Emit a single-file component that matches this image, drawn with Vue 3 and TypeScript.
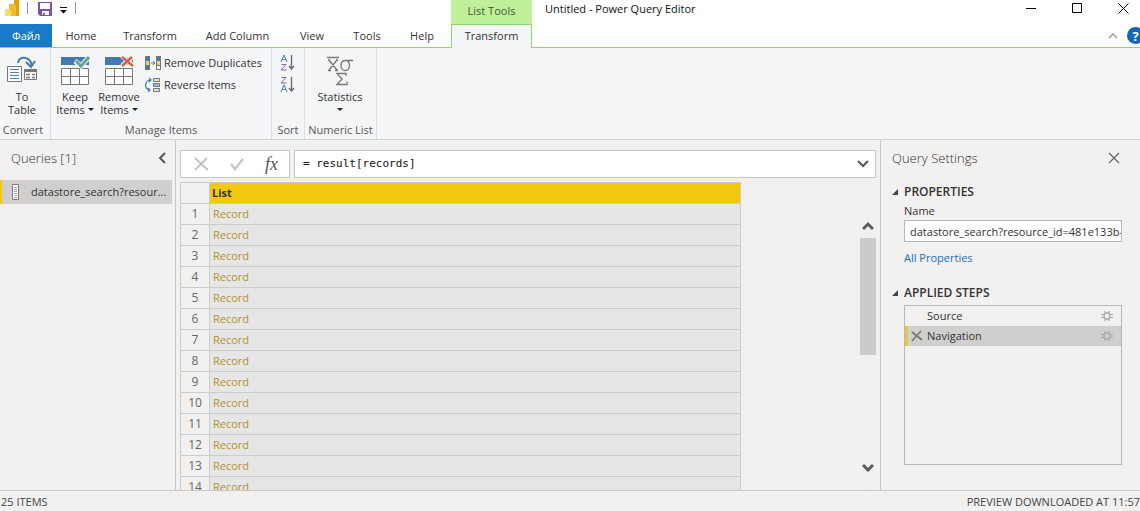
<script setup lang="ts">
import { ref } from 'vue'

const tabs: string[] = ['Home', 'Transform', 'Add Column', 'View', 'Tools', 'Help']
const rows: number[] = Array.from({ length: 14 }, (_, i) => i + 1)
const formula = ref('= result[records]')
const queryName = ref('datastore_search?resource_id=481e133b-')
const steps = ref<string[]>(['Source', 'Navigation'])
const selected = ref(1)
</script>

<template>
  <div class="app">
    <header class="header">
      <div class="quick">
        <svg class="logo" width="16" height="18" viewBox="0 0 16 18">
          <rect x="10" y="0" width="5" height="17" fill="#e0a112" />
          <path d="M5 5h5l2 2v10H5z" fill="#efbd2b" />
          <path d="M1 10h4l2 2v5H1z" fill="#f8dc6a" />
        </svg>
        <span class="bar"></span>
        <button class="plain save" aria-label="Save">
          <svg width="14" height="14" viewBox="0 0 14 14">
            <path d="M0 0h14v14H2l-2-2z" fill="#7f55a3" />
            <path d="M2 1h10v6H2zM4 9h7v4H4z" fill="#fff" />
            <path d="M5 11h2v2H5z" fill="#7f55a3" />
          </svg>
        </button>
        <button class="plain more" aria-label="Customize toolbar">
          <svg width="8" height="8" viewBox="0 0 8 8">
            <path d="M0 1h7v1H0zM0 4h7L3.500 7.500z" fill="#111" />
          </svg>
        </button>
        <span class="bar"></span>
      </div>
      <div class="context">List Tools</div>
      <div class="titlebar">
        <span class="title">Untitled - Power Query Editor</span>
        <div class="window">
          <button class="plain" aria-label="Minimize">
            <svg width="11" height="11" viewBox="0 0 11 11"><path d="M0 5.500h10" stroke="#000" /></svg>
          </button>
          <button class="plain" aria-label="Maximize">
            <svg width="11" height="11" viewBox="0 0 11 11"><path d="M.5 .5h9v9h-9z" fill="none" stroke="#000" /></svg>
          </button>
          <button class="plain" aria-label="Close">
            <svg width="11" height="11" viewBox="0 0 11 11"><path d="M.5 .5l10 10M10.500 .5l-10 10" stroke="#000" /></svg>
          </button>
        </div>
      </div>
      <nav class="tabs">
        <button class="tab file" lang="ru">Файл</button>
        <button v-for="tab in tabs" :key="tab" class="tab">{{ tab }}</button>
      </nav>
      <button class="tab current">Transform</button>
      <div class="help-area">
        <button class="plain" aria-label="Collapse ribbon">
          <svg width="10" height="6" viewBox="0 0 10 6"><path d="M1 5l4-4 4 4" fill="none" stroke="#999" stroke-width="1.300" /></svg>
        </button>
        <button class="plain help">?</button>
      </div>
    </header>

    <section class="ribbon">
      <div class="group convert">
        <div class="tools">
          <button class="plain big">
            <svg width="32" height="30" viewBox="0 0 32 30" fill="none">
              <path d="M12 7c0-7 12-8 14 3" stroke="#4279ad" stroke-width="2" />
              <path d="M20 6l5 5 4-6" stroke="#4279ad" stroke-width="2" />
              <path d="M1.500 10.500h14v15h-14z" fill="#fff" stroke="#777" />
              <path d="M4 13.500h9M4 16.500h9M4 19.500h9M4 22.500h9" stroke="#4d83b5" />
              <path d="M18.500 13.500h12v10h-12z" fill="#fff" stroke="#777" />
              <path d="M18 13h13v3H18z" fill="#777" />
              <path d="M20 18.500h4M26 18.500h3M20 21.500h4M26 21.500h3" stroke="#777" stroke-width="1.500" />
            </svg>
            <span>To</span><span>Table</span>
          </button>
        </div>
        <div class="caption">Convert</div>
      </div>
      <div class="group manage">
        <div class="tools">
          <button v-for="name in ['Keep', 'Remove']" :key="name" class="plain big">
            <svg width="30" height="30" viewBox="0 0 30 30" fill="none">
              <path d="M1 1h28v8H1z" fill="#4179b0" />
              <path d="M1.500 12.500h27v16h-27zM1 20.500h28M10.500 12v17M19.500 12v17" fill="#fff" stroke="#777" />
              <template v-if="name === 'Keep'">
                <path d="M15 5l6 5L30 0" stroke="#f4f5f7" stroke-width="5" />
                <path d="M16 5l5 5L29 1" stroke="#69a58d" stroke-width="3" />
              </template>
              <template v-else>
                <path d="M18 0l11 10M29 0L18 10" stroke="#f4f5f7" stroke-width="5" />
                <path d="M18 1l11 9M28 1L18 10" stroke="#d2614a" stroke-width="2.500" />
              </template>
            </svg>
            <span>{{ name }}</span>
            <span class="drop">Items <i class="caret"></i></span>
          </button>
          <div class="stack">
            <button class="plain small">
              <svg width="16" height="14" viewBox="0 0 16 14">
                <path d="M0 0h5v14H0zM11 0h5v14h-5z" fill="#777" />
                <path d="M1 1h3v3H1zM1 10h3v3H1zM12 1h3v3h-3z" fill="#3f78b4" />
                <path d="M1 5h3v4H1zM12 5h3v4h-3z" fill="#f0ce83" />
                <path d="M12 10h3v3h-3z" fill="#fff" />
                <path d="M6 7h4M8 5l2 2-2 2" fill="none" stroke="#3f78b4" />
              </svg>
              Remove Duplicates
            </button>
            <button class="plain small">
              <svg width="16" height="14" viewBox="0 0 16 14" fill="none">
                <path d="M8.500 .5h6v3h-6zM8.500 5.500h6v3h-6zM8.500 10.500h6v3h-6z" fill="#ddd" stroke="#777" />
                <path d="M9 6h5v2H9z" fill="#9dbbd6" />
                <path d="M6 2C-1 2-1 12 5 12M4 0l2 2-2 2M3 10l2 2-2 2" stroke="#3f78b4" stroke-width="1.200" />
              </svg>
              Reverse Items
            </button>
          </div>
        </div>
        <div class="caption">Manage Items</div>
      </div>
      <div class="group sort">
        <div class="tools">
          <button class="plain" aria-label="Sort ascending">
            <svg width="15" height="18" viewBox="0 0 15 18" fill="none">
              <path d="M1 8l3-7 3 7M2 5.500h4" stroke="#4b83ba" />
              <path d="M1.500 10.500h4.500l-5 5.500h5.500" stroke="#8a63ad" />
              <path d="M11.500 1v14M9 12l2.500 3L14 12" stroke="#666" stroke-width="1.300" />
            </svg>
          </button>
          <button class="plain" aria-label="Sort descending">
            <svg width="15" height="18" viewBox="0 0 15 18" fill="none">
              <path d="M1.500 1.500h4.500l-5 5.500h5.500" stroke="#8a63ad" />
              <path d="M1 16l3-7 3 7M2 13.500h4" stroke="#4b83ba" />
              <path d="M11.500 1v14M9 12l2.500 3L14 12" stroke="#666" stroke-width="1.300" />
            </svg>
          </button>
        </div>
        <div class="caption">Sort</div>
      </div>
      <div class="group numeric">
        <div class="tools">
          <button class="plain big">
            <svg width="28" height="30" viewBox="0 0 28 30" fill="none" stroke="#777" stroke-width="1.300">
              <path d="M1 1.500h12M3 4l8 10M11 4L3 14M2 4h2M10 4h2M2 14.500h3M9 14.500h3" />
              <path d="M27 4.500h-7c-7 0-6 10-1 10s6-7 2-10" />
              <path d="M20 20v-2.500h-9l5 5.500-5 5.500h10v-3" />
            </svg>
            <span>Statistics</span>
            <i class="caret lone"></i>
          </button>
        </div>
        <div class="caption">Numeric List</div>
      </div>
    </section>

    <main class="work">
      <aside class="queries">
        <div class="panel-head">
          <h2>Queries [1]</h2>
          <button class="plain" aria-label="Collapse queries">
            <svg width="8" height="12" viewBox="0 0 8 12"><path d="M7 1L2 6l5 5" fill="none" stroke="#555" stroke-width="2" /></svg>
          </button>
        </div>
        <button class="query">
          <svg width="8" height="16" viewBox="0 0 8 16">
            <path d="M.5 .5h6v15h-6z" fill="#fff" stroke="#777" />
            <path d="M2 3.500h3M2 5.500h3M2 7.500h3M2 9.500h3M2 11.500h3M2 13.500h3" stroke="#aaa" />
          </svg>
          <span>datastore_search?resour...</span>
        </button>
      </aside>

      <section class="editor">
        <div class="formula-bar">
          <div class="formula-tools">
            <button class="plain" aria-label="Cancel">
              <svg width="16" height="14" viewBox="0 0 16 14"><path d="M2 1l13 12M14 1L2 13" stroke="#c4c4c4" stroke-width="2" /></svg>
            </button>
            <button class="plain" aria-label="Accept">
              <svg width="14" height="14" viewBox="0 0 14 14"><path d="M1 7l4 5 8-10" fill="none" stroke="#c8c8c8" stroke-width="2.500" /></svg>
            </button>
            <button class="plain fx">fx</button>
          </div>
          <div class="formula">
            <input v-model="formula" aria-label="Formula" spellcheck="false" />
            <button class="plain" aria-label="Expand formula bar">
              <svg width="12" height="8" viewBox="0 0 12 8"><path d="M1 1l5 5 5-5" fill="none" stroke="#555" stroke-width="2" /></svg>
            </button>
          </div>
        </div>
        <div class="grid-area">
          <div class="grid-view">
            <table>
              <thead>
                <tr><th class="num"></th><th class="list">List</th></tr>
              </thead>
              <tbody>
                <tr v-for="n in rows" :key="n">
                  <td class="num">{{ n }}</td>
                  <td class="value"><a href="#">Record</a></td>
                </tr>
              </tbody>
            </table>
          </div>
          <div class="scroll">
            <button class="plain" aria-label="Scroll up">
              <svg width="12" height="10" viewBox="0 0 12 10"><path d="M1 8l5-5 5 5" fill="none" stroke="#5a5a5a" stroke-width="3" /></svg>
            </button>
            <div class="track"><div class="thumb"></div></div>
            <button class="plain" aria-label="Scroll down">
              <svg width="12" height="10" viewBox="0 0 12 10"><path d="M1 2l5 5 5-5" fill="none" stroke="#5a5a5a" stroke-width="3" /></svg>
            </button>
          </div>
        </div>
      </section>

      <aside class="settings">
        <div class="panel-head">
          <h2>Query Settings</h2>
          <button class="plain" aria-label="Close settings">
            <svg width="12" height="12" viewBox="0 0 12 12"><path d="M1 1l10 10M11 1L1 11" stroke="#666" stroke-width="1.200" /></svg>
          </button>
        </div>
        <h3><i class="corner"></i>PROPERTIES</h3>
        <div class="block">
          <label for="query-name">Name</label>
          <input id="query-name" v-model="queryName" spellcheck="false" />
          <a href="#">All Properties</a>
        </div>
        <h3><i class="corner"></i>APPLIED STEPS</h3>
        <ul class="steps">
          <li v-for="(step, i) in steps" :key="step" :class="{ active: i === selected }">
            <button class="plain remove" :aria-label="'Delete ' + step">
              <svg v-if="i === selected" width="12" height="12" viewBox="0 0 12 12"><path d="M1 2l10 8M10 1L1 11" stroke="#777" stroke-width="1.700" /></svg>
            </button>
            <button class="plain name" @click="selected = i">{{ step }}</button>
            <button class="plain gear" :aria-label="'Edit ' + step">
              <svg width="12" height="12" viewBox="0 0 12 12" fill="none" stroke="#aaa">
                <circle cx="6" cy="6" r="3" stroke-width="1.300" />
                <path d="M4.500 3.500L3.500 1M7.500 3.500L8.500 1M4.500 8.500l-1 2.500M7.500 8.500l1 2.500M3.500 4.500H0M3.500 7.500H0M8.500 4.500H12M8.500 7.500H12" stroke-width="1.200" />
              </svg>
            </button>
          </li>
        </ul>
      </aside>
    </main>

    <footer class="status">
      <span>25 ITEMS</span>
      <span>PREVIEW DOWNLOADED AT 11:57</span>
    </footer>
  </div>
</template>

<style>
body {
  margin: 0;
}
</style>

<style scoped>
.app {
  display: flex;
  flex-direction: column;
  height: 100vh;
  overflow: hidden;
  background: #f2f1f0;
  color: #333;
  font: 11px/14px "Open Sans", "Noto Sans", sans-serif;
}
.app * {
  box-sizing: border-box;
}
button,
input {
  font: inherit;
  color: inherit;
}
button {
  border: 0;
  padding: 0;
}
svg {
  display: block;
  flex: none;
}
.plain {
  background: none;
}
h2,
h3 {
  margin: 0;
}

/* Title bar and tabs */
.header {
  flex: none;
  display: grid;
  grid-template-columns: 451px 81px 1fr;
  grid-template-rows: 24px 24px;
  background: #fff;
  overflow: hidden;
}
.quick {
  display: flex;
  align-items: center;
  padding: 0 0 8px 4px;
}
.bar {
  width: 1px;
  height: 12px;
  background: #999;
}
.logo {
  margin-right: 7px;
}
.save {
  margin: 2px 8px 0 10px;
}
.more {
  margin: 4px 7px 0 0;
}
.context {
  background: #c1f09b;
  color: #3d5a2c;
  text-align: center;
  line-height: 22px;
}
.titlebar {
  display: flex;
  justify-content: space-between;
  padding-left: 13px;
  color: #111;
}
.title {
  line-height: 18px;
}
.window {
  display: flex;
  height: 16px;
  margin-right: -6px;
}
.window button {
  width: 46px;
  display: flex;
  align-items: center;
  justify-content: center;
}
.tabs {
  display: grid;
  grid-template-columns: 52px 58px 80px 95px 54px 56px 54px;
  border-bottom: 1px solid #92d668;
}
.tab {
  background: none;
  padding: 0;
  text-align: center;
  white-space: nowrap;
}
.file {
  background: #1979ca;
  color: #fff;
}
.current {
  padding-bottom: 2px;
  background: #f4f5f7;
  border: solid #92d668;
  border-width: 1px 1px 0;
}
.help-area {
  display: flex;
  justify-content: flex-end;
  align-items: center;
  gap: 9px;
  border-bottom: 1px solid #92d668;
}
.help {
  width: 17px;
  height: 17px;
  margin-right: -4px;
  border-radius: 50%;
  background: #1167bd;
  color: #fff;
  font-size: 13px;
  font-weight: 700;
}

/* Ribbon */
.ribbon {
  flex: none;
  display: flex;
  background: #f4f5f7;
  border-bottom: 1px solid #d2d2d2;
}
.group {
  display: flex;
  flex-direction: column;
  height: 91px;
  padding-bottom: 2px;
  border-right: 1px solid #dcdde0;
}
.tools {
  flex: 1;
  display: flex;
  padding-top: 8px;
}
.caption {
  text-align: center;
  line-height: 14px;
  color: #555;
}
.convert {
  width: 51px;
  padding-right: 4px;
}
.manage {
  width: 221px;
}
.manage .tools {
  padding-left: 2px;
}
.sort {
  width: 33px;
}
.sort .tools {
  flex-direction: column;
  gap: 4px;
  padding: 6px 0 0 8px;
}
.numeric {
  width: 72px;
}
.big {
  display: flex;
  flex-direction: column;
  align-items: center;
  width: 44px;
  line-height: 13px;
}
.numeric .big {
  width: 70px;
}
.big svg {
  margin-bottom: 4px;
}
.drop {
  display: flex;
  align-items: center;
  gap: 3px;
}
.caret {
  border: solid transparent;
  border-width: 3px 3px 0;
  border-top-color: #222;
}
.lone {
  margin-top: 5px;
}
.stack {
  display: flex;
  flex-direction: column;
  gap: 8px;
  margin-left: 4px;
}
.small {
  display: flex;
  align-items: center;
  gap: 3px;
  height: 14px;
  white-space: nowrap;
}

/* Work area */
.work {
  flex: 1;
  min-height: 0;
  display: grid;
  grid-template-columns: 176px 1fr 260px;
  grid-template-rows: 100%;
}
.panel-head {
  display: flex;
  justify-content: space-between;
  align-items: center;
  height: 36px;
}
h2 {
  font-size: 13px;
  font-weight: 300;
}
.queries {
  border-right: 1px solid #c8c8c8;
}
.queries .panel-head {
  padding: 0 9px 0 11px;
  margin-bottom: 4px;
}
.query {
  display: flex;
  align-items: center;
  gap: 11px;
  width: calc(100% - 3px);
  height: 24px;
  padding-left: 10px;
  border-left: 2px solid #f2c811;
  background: #d0cfce;
  white-space: nowrap;
}
.editor {
  display: flex;
  flex-direction: column;
  min-width: 0;
  padding: 10px 4px 0;
}
.formula-bar {
  flex: none;
  display: flex;
  gap: 4px;
  height: 28px;
  margin-bottom: 4px;
}
.formula-tools,
.formula {
  display: flex;
  align-items: center;
  background: #fff;
  border: 1px solid #c8c8c8;
}
.formula-tools {
  width: 110px;
  gap: 21px;
  padding-left: 12px;
}
.fx {
  font: italic 18px/20px "Liberation Serif", serif;
  color: #555;
}
.formula {
  flex: 1;
  padding: 0 6px 0 8px;
}
.formula input {
  flex: 1;
  min-width: 0;
  padding: 0;
  border: 0;
  outline: 0;
  font: 11px/14px "DejaVu Sans Mono", monospace;
  color: #111;
}
.grid-area {
  flex: 1;
  min-height: 0;
  display: flex;
  justify-content: space-between;
}
.grid-view {
  overflow: hidden;
}
table {
  width: 561px;
  table-layout: fixed;
  border-collapse: separate;
  border-spacing: 0;
  border: solid #ccc;
  border-width: 1px 0 0 1px;
}
th,
td {
  height: 21px;
  padding: 0;
  border: solid #ccc;
  border-width: 0 1px 1px 0;
}
.num {
  width: 29px;
  text-align: center;
  font-size: 12px;
  color: #666;
}
.list {
  padding-left: 2px;
  background: #f2c811;
  text-align: left;
  color: #333;
}
.value {
  padding-left: 3px;
  background: #e6e6e6;
}
.value a {
  color: #b3922f;
  text-decoration: none;
}
.scroll {
  display: flex;
  flex-direction: column;
  width: 16px;
  margin-top: 22px;
  padding: 17px 0 11px;
  background: #f0f0f0;
}
.scroll button {
  display: flex;
  justify-content: center;
  height: 16px;
}
.track {
  flex: 1;
  padding-top: 1px;
}
.thumb {
  height: 52%;
  background: #cbcbcb;
}

/* Settings pane */
.settings {
  border-left: 1px solid #c8c8c8;
  padding: 0 18px 0 11px;
}
.settings .panel-head {
  padding-right: 2px;
}
h3 {
  display: flex;
  align-items: center;
  gap: 6px;
  height: 28px;
  padding-top: 3px;
  font-size: 12px;
  font-weight: 600;
}
.corner {
  border: solid transparent;
  border-width: 0 0 6px 6px;
  border-bottom-color: #444;
}
.block {
  display: flex;
  flex-direction: column;
  align-items: flex-start;
  padding-left: 12px;
  margin-bottom: 12px;
}
.block input {
  width: 100%;
  height: 22px;
  margin: 2px 0 9px;
  padding: 0 0 0 5px;
  border: 1px solid #b8b8b8;
  background: #fff;
}
.block a {
  color: #1b6ec2;
  text-decoration: none;
}
.steps {
  height: 160px;
  margin: 0 0 0 12px;
  padding: 0;
  border: 1px solid #b8b8b8;
  list-style: none;
}
.steps li {
  display: flex;
  align-items: center;
  height: 20px;
  padding-right: 8px;
  border-left: 3px solid transparent;
}
.steps .active {
  background: #d0cfce;
  border-left-color: #e2c84c;
}
.remove {
  width: 19px;
  padding-left: 3px;
}
.name {
  flex: 1;
  text-align: left;
}
.status {
  flex: none;
  display: flex;
  justify-content: space-between;
  height: 21px;
  padding-left: 1px;
  border-top: 1px solid #c8c8c8;
  line-height: 22px;
  color: #444;
}
</style>
